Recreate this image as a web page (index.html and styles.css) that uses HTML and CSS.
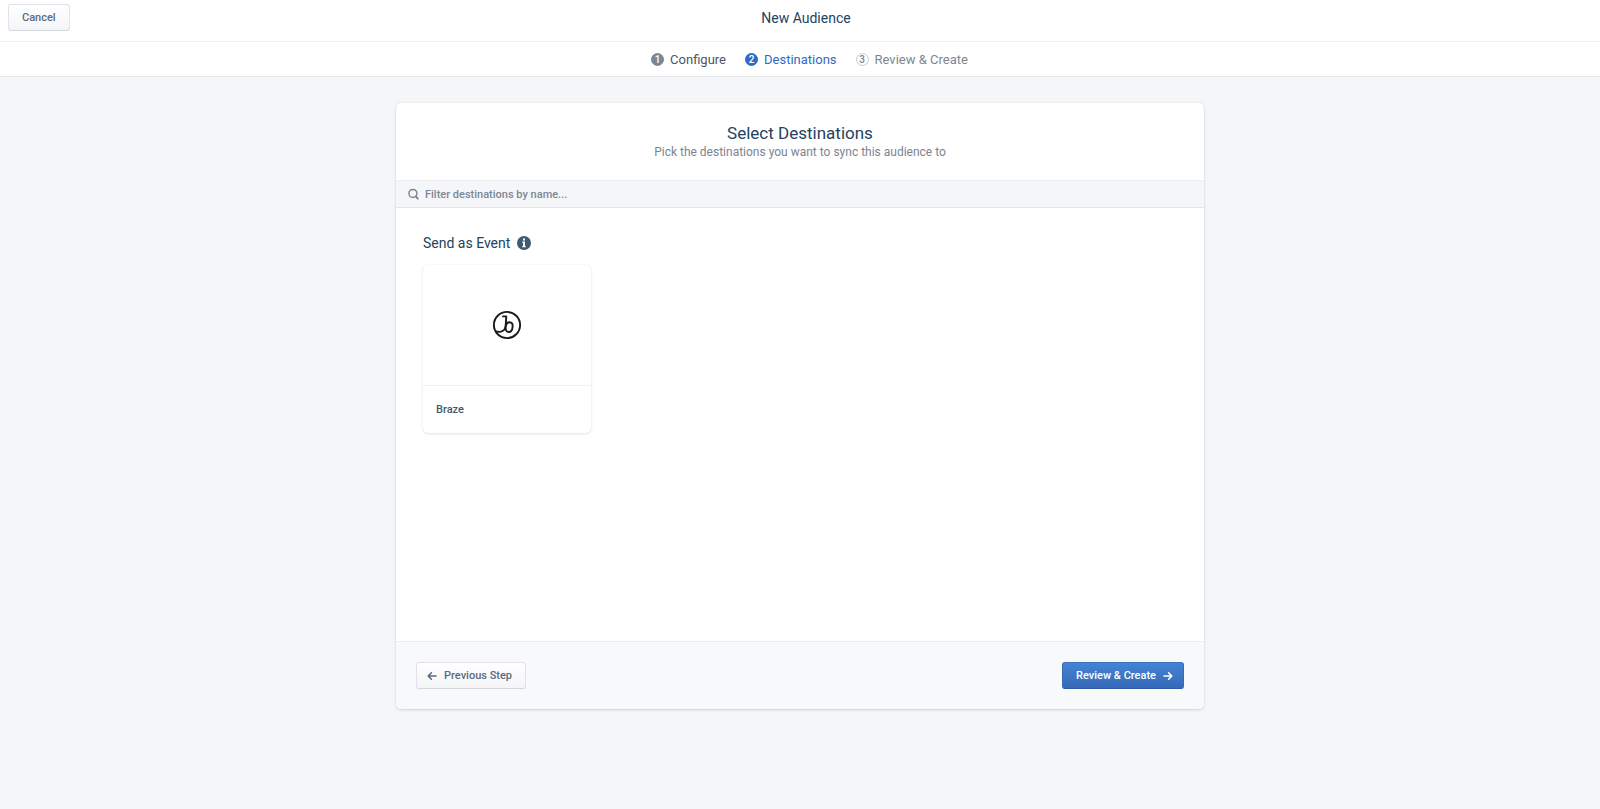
FILE: index.html
```html
<!DOCTYPE html>
<html lang="en">
<head>
  <meta charset="UTF-8">
  <title>New Audience</title>
  <link rel="stylesheet" href="styles.css">
</head>
<body>

  <header class="topbar">
    <button type="button" class="btn">Cancel</button>
    <h1>New Audience</h1>
  </header>

  <nav class="steps">
    <a href="#configure" class="step done"><span class="num">1</span>Configure</a>
    <a href="#destinations" class="step active"><span class="num">2</span>Destinations</a>
    <a href="#review" class="step"><span class="num">3</span>Review &amp; Create</a>
  </nav>

  <main class="card">
    <div class="card-header">
      <h2>Select Destinations</h2>
      <p>Pick the destinations you want to sync this audience to</p>
    </div>

    <label class="search">
      <svg width="12" height="12" viewBox="0 0 12 12" fill="none" stroke="currentColor">
        <circle cx="4.9" cy="5.4" r="4" stroke-width="1.5"/>
        <path d="M7.8 8.4L9.8 10.6" stroke-width="2" stroke-linecap="round"/>
      </svg>
      <input type="search" placeholder="Filter destinations by name..." aria-label="Filter destinations by name">
    </label>

    <section class="card-body">
      <h3>
        Send as Event
        <svg width="14" height="14" viewBox="0 0 14 14">
          <circle cx="7" cy="7" r="7" fill="#425a70"/>
          <path d="M6 2.6h2v1.8H6zM5.2 5.6H8v4.6h.9v1.1H5.1v-1.1H6V6.7h-.8z" fill="#fff"/>
        </svg>
      </h3>
      <a href="#braze" class="tile">
        <span class="tile-logo">
          <svg width="30" height="30" viewBox="0 0 30 30" fill="none" stroke="#1a1a1a" stroke-width="1.9" stroke-linecap="round" stroke-linejoin="round">
            <circle cx="15" cy="15" r="13.1"/>
            <path d="M11 6.4H14.3L13.6 16.6C13 20.4 9.4 23 4 21.4"/>
            <path d="M13.6 17.2C14 14 15.6 12.2 17.5 12.2C19.7 12.2 20.9 13.8 20.6 16.8C20.3 20 18.8 22 16.8 22C14.6 22 13.4 20 13.6 17.2"/>
          </svg>
        </span>
        <span class="tile-name">Braze</span>
      </a>
    </section>

    <footer class="card-footer">
      <button type="button" class="btn btn-back">
        <svg width="10" height="10" viewBox="0 0 10 10" fill="none" stroke="currentColor" stroke-width="1.6" stroke-linecap="round" stroke-linejoin="round">
          <path d="M9 5H1.2M4.4 1.8L1.2 5L4.4 8.2"/>
        </svg>
        Previous Step
      </button>
      <button type="button" class="btn btn-primary">
        Review &amp; Create
        <svg width="10" height="10" viewBox="0 0 10 10" fill="none" stroke="currentColor" stroke-width="1.6" stroke-linecap="round" stroke-linejoin="round">
          <path d="M1 5H8.8M5.6 1.8L8.8 5L5.6 8.2"/>
        </svg>
      </button>
    </footer>
  </main>

</body>
</html>
```
FILE: styles.css
```css
* {
  box-sizing: border-box;
}
body {
  margin: 0;
  background: #f5f6f8;
  color: #425a70;
  font-family: Roboto, "Liberation Sans", sans-serif;
  font-size: 14px;
}
h1, h2, h3, p {
  margin: 0;
  font-weight: 400;
}
a {
  color: inherit;
  text-decoration: none;
}

.btn {
  display: inline-flex;
  align-items: center;
  gap: 7px;
  height: 27px;
  padding: 0 13px;
  border: 1px solid #e1e3e8;
  border-bottom-color: #d3d6dc;
  border-radius: 3px;
  background: linear-gradient(#fff, #f4f5f7);
  color: #5a6b80;
  font-family: inherit;
  font-size: 11px;
  font-weight: 500;
}
.btn-back {
  padding-left: 10px;
}
.btn-primary {
  padding-right: 10px;
  border-color: #3a72c0 #356ab5 #2a5ba6;
  background: linear-gradient(#4384d2, #3769b8);
  color: #fff;
}

.topbar {
  display: grid;
  grid-template-columns: 1fr auto 1fr;
  align-items: start;
  height: 42px;
  padding: 4px 0 0 12px;
  border-bottom: 1px solid #f0f1f3;
  background: #fff;
}
.topbar .btn {
  justify-self: start;
  margin-left: -4px;
}
.topbar h1 {
  color: #234361;
  font-size: 14px;
  line-height: 28px;
}

.steps {
  display: flex;
  justify-content: center;
  height: 35px;
  border-bottom: 1px solid #e6e8eb;
  background: #fff;
}
.step {
  display: flex;
  align-items: center;
  gap: 6px;
  margin-left: 19px;
  color: #7d8691;
  font-size: 13px;
}
.num {
  display: flex;
  align-items: center;
  justify-content: center;
  width: 13px;
  height: 13px;
  border: 1px solid #c9cdd2;
  border-radius: 50%;
  font-size: 10px;
  font-weight: 500;
}
.done {
  color: #4a5766;
}
.done .num {
  border-color: #7b8794;
  background: #7b8794;
  color: #fff;
}
.active {
  color: #2f6bc4;
}
.active .num {
  border-color: #2f6bc4;
  background: #2f6bc4;
  color: #fff;
}

.card {
  max-width: 808px;
  margin: 26px auto;
  border-radius: 5px;
  background: #fff;
  box-shadow: 0 0 1px rgba(67, 90, 111, 0.2), 0 1px 3px rgba(67, 90, 111, 0.2);
  overflow: hidden;
}
.card-header {
  padding: 20px 20px 19px;
  text-align: center;
}
.card-header h2 {
  color: #234361;
  font-size: 17px;
  line-height: 20px;
}
.card-header p {
  color: #7b8591;
  font-size: 12px;
  line-height: 18px;
}

.search {
  display: flex;
  align-items: center;
  gap: 3px;
  height: 28px;
  padding: 0 12px;
  border-top: 1px solid #edeff1;
  border-bottom: 1px solid #e1e4e8;
  background: #f5f6f8;
  color: #7d8797;
}
.search input {
  flex: 1;
  border: 0;
  outline: 0;
  background: none;
  color: #425a70;
  font-family: inherit;
  font-size: 11px;
  font-weight: 500;
}
.search input::placeholder {
  color: #7d8797;
}

.card-body {
  min-height: 433px;
  padding: 25px 27px;
}
.card-body h3 {
  display: flex;
  align-items: center;
  gap: 7px;
  color: #234361;
  font-size: 14px;
  line-height: 20px;
}

.tile {
  display: block;
  width: 168px;
  margin-top: 12px;
  border-radius: 5px;
  box-shadow: 0 0 1px rgba(67, 90, 111, 0.15), 0 1px 3px rgba(67, 90, 111, 0.15);
}
.tile-logo {
  display: flex;
  align-items: center;
  justify-content: center;
  height: 121px;
  border-bottom: 1px solid #f0f1f3;
}
.tile-name {
  display: block;
  padding: 0 13px;
  font-size: 11px;
  font-weight: 500;
  line-height: 47px;
}

.card-footer {
  display: flex;
  justify-content: space-between;
  padding: 20px;
  border-top: 1px solid #eceef1;
  background: #f8f9fb;
}
```
